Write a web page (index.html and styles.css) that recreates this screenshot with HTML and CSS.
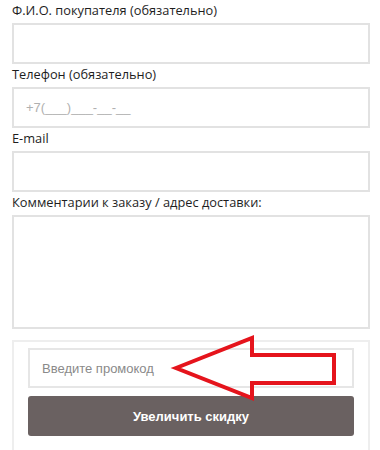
FILE: index.html
```html
<!DOCTYPE html>
<html lang="ru">
<head>
<meta charset="utf-8">
<title>Заказ</title>
<link rel="stylesheet" href="styles.css">
</head>
<body>
<form class="order">
  <label class="field-label" for="fio">Ф.И.О. покупателя (обязательно)</label>
  <input class="field" id="fio" type="text">
  <label class="field-label" for="phone">Телефон (обязательно)</label>
  <input class="field field-phone" id="phone" type="text" placeholder="+7(___)___-__-__">
  <label class="field-label" for="email">E-mail</label>
  <input class="field" id="email" type="text">
  <label class="field-label" for="comment">Комментарии к заказу / адрес доставки:</label>
  <textarea class="field field-area" id="comment"></textarea>
  <div class="promo">
    <input class="promo-input" type="text" placeholder="Введите промокод">
    <button class="promo-btn" type="button">Увеличить скидку</button>
    <svg class="arrow" width="180" height="80" viewBox="0 0 180 80">
      <polygon points="8,34 84,4 84,21 166,21 166,49 84,49 84,64" fill="none" stroke="#e5141c" stroke-width="4" stroke-linejoin="miter"/>
    </svg>
  </div>
</form>
</body>
</html>
```
FILE: styles.css
```css
html, body {
  margin: 0;
  padding: 0;
  background: #fff;
}
body {
  font-family: "Open Sans", "DejaVu Sans", sans-serif;
  color: #333;
  overflow: hidden;
  height: 450px;
}
.order {
  display: flex;
  flex-direction: column;
  padding: 0 10px 0 12px;
}
.field-label {
  display: block;
  font-size: 12.8px;
  font-weight: 500;
  line-height: 20px;
  margin-bottom: 3px;
  color: #1e1e1e;
}
.field {
  box-sizing: border-box;
  width: 100%;
  height: 41px;
  border: 2px solid #e2e2e2;
  background: #fff;
  margin: 0;
  padding: 0 12px;
  font-family: "Open Sans", sans-serif;
  font-size: 13px;
  outline: none;
}
.field::placeholder {
  color: #b0b0b0;
}
.field-phone {
  font-family: "Liberation Sans", Arial, sans-serif;
}
.field-area {
  height: 114px;
  resize: none;
  display: block;
}
.promo {
  position: relative;
  margin-top: 11px;
  border: 2px solid #eeeeee;
  border-bottom: none;
  padding: 6px 14px 30px 14px;
  display: flex;
  flex-direction: column;
}
.promo-input {
  box-sizing: border-box;
  height: 40px;
  border: 2px solid #e6e6e6;
  padding: 0 12px;
  margin: 0;
  font-family: "Liberation Sans", Arial, sans-serif;
  font-size: 13px;
  outline: none;
}
.promo-input::placeholder {
  color: #8a8a8a;
}
.promo-btn {
  margin-top: 8px;
  height: 40px;
  border: none;
  border-radius: 3px;
  background: #6a6161;
  color: #fff;
  font-family: "Liberation Sans", Arial, sans-serif;
  font-weight: bold;
  font-size: 13px;
}
.arrow {
  position: absolute;
  left: 154px;
  top: -8px;
  pointer-events: none;
}
```
